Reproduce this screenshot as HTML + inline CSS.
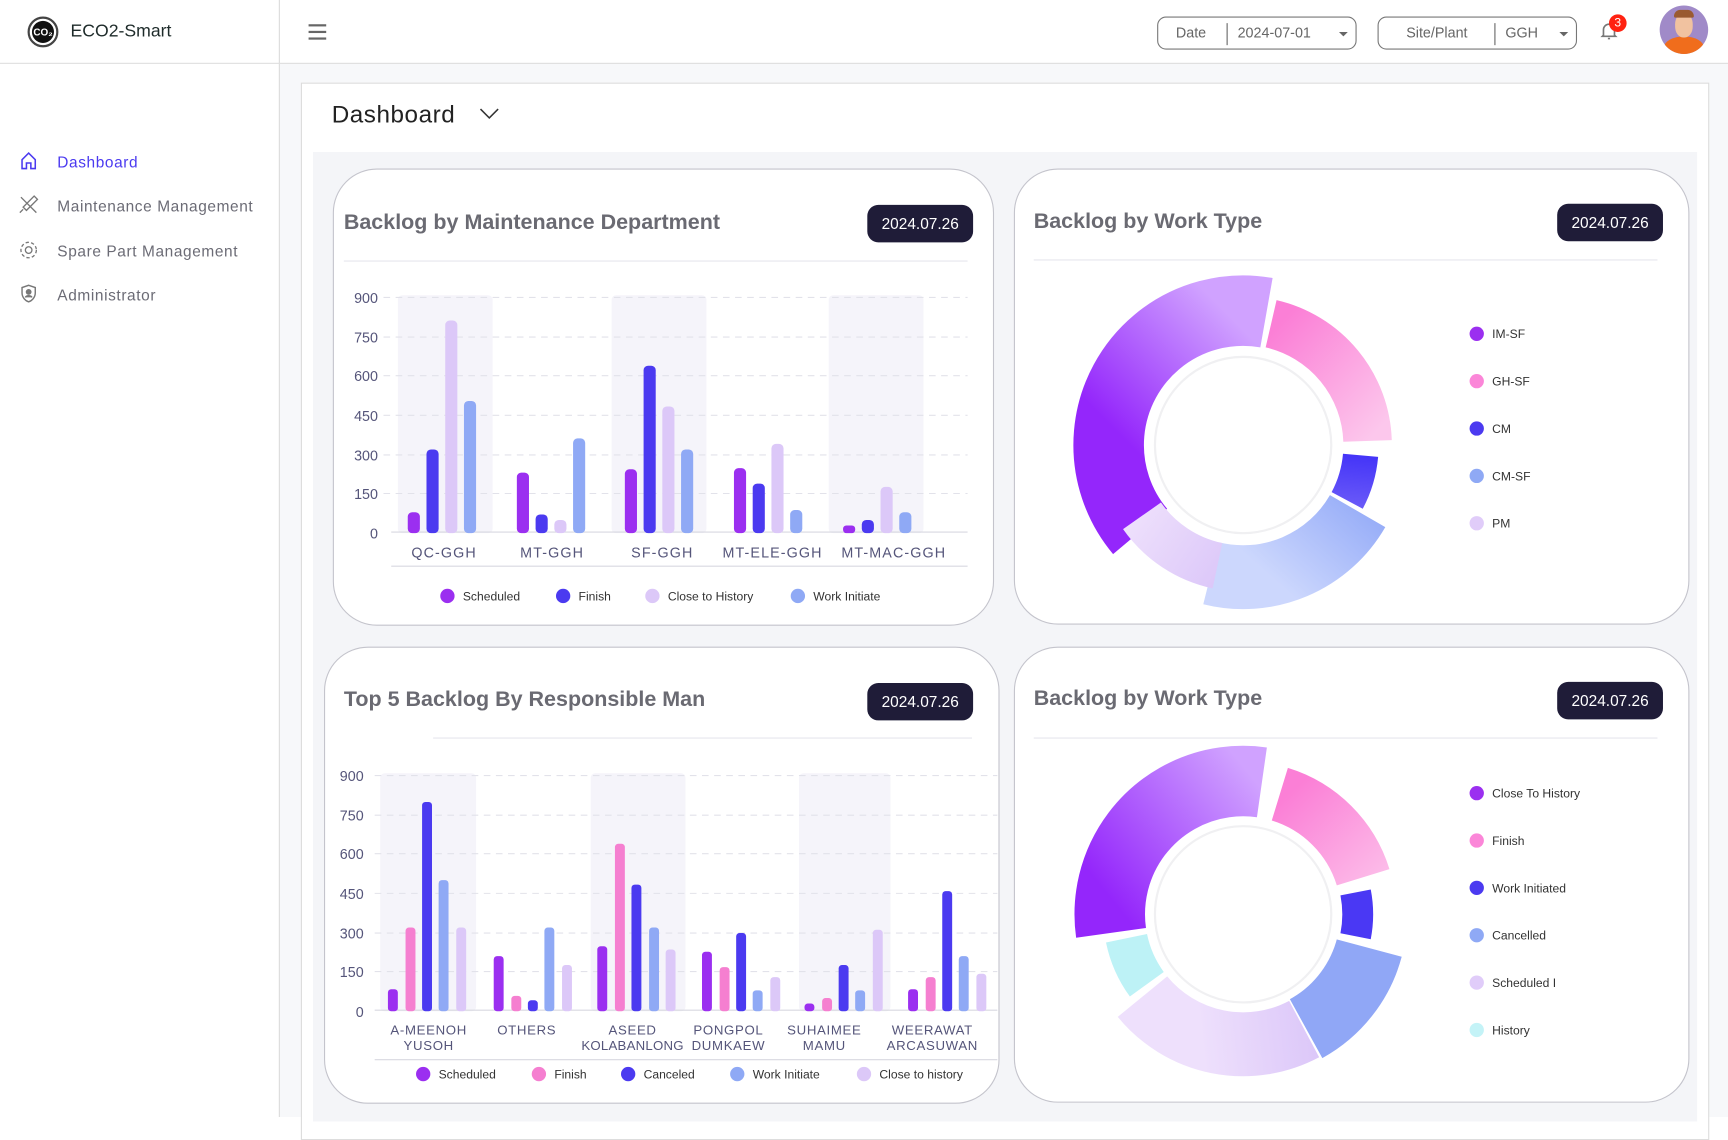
<!DOCTYPE html>
<html><head><meta charset="utf-8"><style>
*{margin:0;padding:0;box-sizing:border-box}
html,body{width:1728px;height:1117px;overflow:hidden;background:#fff;font-family:"Liberation Sans",sans-serif}
#s{position:absolute;left:0;top:0;width:1568px;height:1014px;transform:scale(1.10204,1.10158);transform-origin:0 0;background:#f7f8fa}
.a{position:absolute}
.nav{position:absolute;left:52px;font-size:14px;color:#6b6b75;letter-spacing:.55px}
.card{position:absolute;background:#fff;border:1px solid #c4c4cc;border-radius:40px}
.t{position:absolute;font-size:19.5px;font-weight:bold;color:#6a6a72}
.pill{position:absolute;background:#1f1c38;color:#fff;font-size:14px;border-radius:10px;width:96px;height:34px;line-height:34px;text-align:center}
.sel{position:absolute;top:15px;height:30px;border:1px solid #777;border-radius:8px;font-size:13px;color:#666}
</style></head><body><div id="s">
<div class="a" style="left:0;top:0;width:1568px;height:58px;background:#fff;border-bottom:1px solid #dcdcdc"></div>
<div class="a" style="left:0;top:58px;width:254px;height:956px;background:#fff;border-right:1px solid #dcdcdc"></div>
<div class="a" style="left:253px;top:0;width:1px;height:58px;background:#dcdcdc"></div>
<div class="a" style="left:25px;top:15px;width:28px;height:28px;border-radius:50%;border:2px solid #444;background:#fff"></div>
<div class="a" style="left:29px;top:19px;width:20px;height:20px;border-radius:50%;background:#111;color:#fff;font-size:9px;font-weight:bold;text-align:center;line-height:20px">CO₂</div>
<div class="a" style="left:64px;top:20px;font-size:16px;color:#1e2b2a">ECO2-Smart</div>
<div class="a" style="left:280px;top:22px;width:16px;height:2px;background:#666;box-shadow:0 6px 0 #666,0 12px 0 #666"></div>
<div class="sel" style="left:1050px;width:181px"><span class="a" style="left:16px;top:6px">Date</span><span class="a" style="left:62px;top:5px;width:1px;height:20px;background:#666"></span><span class="a" style="left:72px;top:6px">2024-07-01</span><span class="a" style="left:164px;top:13px;border:4px solid transparent;border-top:4px solid #666"></span></div>
<div class="sel" style="left:1250px;width:181px"><span class="a" style="left:25px;top:6px">Site/Plant</span><span class="a" style="left:105px;top:5px;width:1px;height:20px;background:#666"></span><span class="a" style="left:115px;top:6px">GGH</span><span class="a" style="left:164px;top:13px;border:4px solid transparent;border-top:4px solid #666"></span></div>
<svg class="a" style="left:1450px;top:18px" width="20" height="20" viewBox="0 0 20 20"><path d="M5 14V9a5 5 0 0110 0v5l1 1H4z" fill="none" stroke="#777" stroke-width="1.5"/><path d="M9 17h2" stroke="#777" stroke-width="1.5"/></svg>
<div class="a" style="left:1460px;top:13px;width:16px;height:16px;border-radius:50%;background:#f21;color:#fff;font-size:11px;text-align:center;line-height:16px">3</div>
<div class="a" style="left:1506px;top:5px;width:44px;height:44px;border-radius:50%;background:#a08ac8;overflow:hidden"><div class="a" style="left:4px;top:28px;width:36px;height:20px;border-radius:50%;background:#f06d1c"></div><div class="a" style="left:14px;top:7px;width:16px;height:22px;border-radius:45%;background:#f1c2a0"></div><div class="a" style="left:13px;top:4px;width:18px;height:7px;border-radius:8px 8px 2px 2px;background:#9a5a30"></div></div>
<svg class="a" style="left:17px;top:137px" width="18" height="18" viewBox="0 0 18 18"><path d="M3 16V8l6-6 6 6v8h-4v-5H7v5z" fill="none" stroke="#4b3af0" stroke-width="1.4"/></svg>
<div class="nav" style="top:139px;color:#4b3af0">Dashboard</div>
<svg class="a" style="left:16px;top:176px" width="20" height="20" viewBox="0 0 20 20" fill="none" stroke="#777" stroke-width="1.2"><path d="M3 3l14 14M15 2l3 3-10 10-3-3zM2 17l3-3"/></svg>
<div class="nav" style="top:179px">Maintenance Management</div>
<svg class="a" style="left:16px;top:217px" width="20" height="20" viewBox="0 0 20 20" fill="none" stroke="#777" stroke-width="1.2"><circle cx="10" cy="10" r="7" stroke-dasharray="3 2"/><circle cx="10" cy="10" r="3"/></svg>
<div class="nav" style="top:220px">Spare Part Management</div>
<svg class="a" style="left:16px;top:257px" width="20" height="20" viewBox="0 0 20 20" fill="none" stroke="#777" stroke-width="1.3"><path d="M10 2l6 2v5c0 4-3 7-6 8-3-1-6-4-6-8V4z"/><circle cx="10" cy="8" r="2" fill="#777"/><path d="M7 13c1-2 5-2 6 0" fill="#777"/></svg>
<div class="nav" style="top:260px">Administrator</div>
<div class="a" style="left:273px;top:75px;width:1278px;height:960px;background:#fff;border:1px solid #dcdcdc"></div>
<div class="a" style="left:301px;top:91px;font-size:22px;color:#222;letter-spacing:.5px">Dashboard</div>
<svg class="a" style="left:435px;top:97px" width="18" height="12"><path d="M1 2l8 8 8-8" fill="none" stroke="#333" stroke-width="1.4"/></svg>
<div class="a" style="left:284px;top:138px;width:1256px;height:880px;background:#f4f5f8"></div>
<div class="card" style="left:302px;top:153px;width:600px;height:415px"></div>
<div class="card" style="left:920px;top:153px;width:613px;height:414px"></div>
<div class="card" style="left:294px;top:587px;width:613px;height:415px"></div>
<div class="card" style="left:920px;top:587px;width:613px;height:414px"></div>
<div class="t" style="left:312px;top:191px">Backlog by Maintenance Department</div>
<div class="t" style="left:938px;top:190px">Backlog by Work Type</div>
<div class="t" style="left:312px;top:624px">Top 5 Backlog By Responsible Man</div>
<div class="t" style="left:938px;top:623px">Backlog by Work Type</div>
<div class="pill" style="left:787px;top:186px">2024.07.26</div>
<div class="pill" style="left:1413px;top:185px">2024.07.26</div>
<div class="pill" style="left:787px;top:620px">2024.07.26</div>
<div class="pill" style="left:1413px;top:619px">2024.07.26</div>
<svg class="a" style="left:0;top:0" width="1568" height="1014" viewBox="0 0 1568 1014" font-family="Liberation Sans, sans-serif">
<defs>
<linearGradient id="gp" x1="1" y1="0.46" x2="0" y2="0.54"><stop offset="0.2" stop-color="#9426fb"/><stop offset="0.8" stop-color="#d0a2ff"/></linearGradient>
<linearGradient id="gp2" x1="1" y1="0.2" x2="0" y2="0.8"><stop offset="0.2" stop-color="#9426fb"/><stop offset="0.8" stop-color="#d0a2ff"/></linearGradient>
<linearGradient id="gk" x1="0.8" y1="0" x2="0.2" y2="1"><stop offset="0.3" stop-color="#fb7fd6"/><stop offset="0.8" stop-color="#fcc7ec"/></linearGradient>
<linearGradient id="gb" x1="0" y1="0" x2="0" y2="1"><stop offset="0.5" stop-color="#4434f8"/><stop offset="1" stop-color="#9a8af8"/></linearGradient>
<linearGradient id="gl" x1="0.6" y1="0" x2="0.4" y2="1"><stop offset="0.3" stop-color="#8ea6f7"/><stop offset="0.8" stop-color="#ccd7fd"/></linearGradient>
<linearGradient id="gv" x1="0.3" y1="1" x2="0.7" y2="0"><stop offset="0.3" stop-color="#eee0fc"/><stop offset="0.8" stop-color="#d8c2f8"/></linearGradient>
</defs>
<g stroke="#e6e6ee"><line x1="312" y1="237" x2="878" y2="237"/><line x1="938" y1="236" x2="1504" y2="236"/><line x1="393" y1="670" x2="882" y2="670"/><line x1="938" y1="670" x2="1504" y2="670"/></g>
<g fill="#f5f4fa"><rect x="361" y="268" width="86" height="216" rx="4"/><rect x="555" y="268" width="86" height="216" rx="4"/><rect x="752" y="268" width="86" height="216" rx="4"/></g>
<g stroke="#e2e2ea" stroke-dasharray="6 5"><line x1="348" y1="270" x2="878" y2="270"/><line x1="348" y1="306" x2="878" y2="306"/><line x1="348" y1="341" x2="878" y2="341"/><line x1="348" y1="377" x2="878" y2="377"/><line x1="348" y1="413" x2="878" y2="413"/><line x1="348" y1="448" x2="878" y2="448"/></g>
<line x1="355" y1="483" x2="878" y2="483" stroke="#d8d8e0"/><line x1="355" y1="514" x2="878" y2="514" stroke="#d8d8e0"/>
<g font-size="13" fill="#55557a" text-anchor="end"><text x="343" y="275">900</text><text x="343" y="311">750</text><text x="343" y="346">600</text><text x="343" y="382">450</text><text x="343" y="418">300</text><text x="343" y="453">150</text><text x="343" y="489">0</text></g>
<g font-size="13" fill="#55557a" text-anchor="middle" letter-spacing="1"><text x="403" y="506">QC-GGH</text><text x="501" y="506">MT-GGH</text><text x="601" y="506">SF-GGH</text><text x="701" y="506">MT-ELE-GGH</text><text x="811" y="506">MT-MAC-GGH</text></g>
<g fill="#9b2ff0"><rect x="370" y="465" width="11" height="19" rx="4"/><rect x="469" y="429" width="11" height="55" rx="4"/><rect x="567" y="426" width="11" height="58" rx="4"/><rect x="666" y="425" width="11" height="59" rx="4"/><rect x="765" y="477" width="11" height="7" rx="3"/></g>
<g fill="#4b3af0"><rect x="387" y="408" width="11" height="76" rx="4"/><rect x="486" y="467" width="11" height="17" rx="4"/><rect x="584" y="332" width="11" height="152" rx="4"/><rect x="683" y="439" width="11" height="45" rx="4"/><rect x="782" y="472" width="11" height="12" rx="4"/></g>
<g fill="#dcc8f8"><rect x="404" y="291" width="11" height="193" rx="4"/><rect x="503" y="472" width="11" height="12" rx="4"/><rect x="601" y="369" width="11" height="115" rx="4"/><rect x="700" y="403" width="11" height="81" rx="4"/><rect x="799" y="442" width="11" height="42" rx="4"/></g>
<g fill="#8fa9f5"><rect x="421" y="364" width="11" height="120" rx="4"/><rect x="520" y="398" width="11" height="86" rx="4"/><rect x="618" y="408" width="11" height="76" rx="4"/><rect x="717" y="463" width="11" height="21" rx="4"/><rect x="816" y="465" width="11" height="19" rx="4"/></g>
<g font-size="11" fill="#333"><circle cx="406" cy="541" r="6.5" fill="#9b2ff0"/><text x="420" y="545">Scheduled</text><circle cx="511" cy="541" r="6.5" fill="#4b3af0"/><text x="525" y="545">Finish</text><circle cx="592" cy="541" r="6.5" fill="#dcc8f8"/><text x="606" y="545">Close to History</text><circle cx="724" cy="541" r="6.5" fill="#8fa9f5"/><text x="738" y="545">Work Initiate</text></g>
<g fill="#f5f4fa"><rect x="345" y="702" width="87" height="216" rx="4"/><rect x="536" y="702" width="86" height="216" rx="4"/><rect x="725" y="702" width="83" height="216" rx="4"/></g>
<g stroke="#e2e2ea" stroke-dasharray="6 5"><line x1="340" y1="704" x2="905" y2="704"/><line x1="340" y1="740" x2="905" y2="740"/><line x1="340" y1="775" x2="905" y2="775"/><line x1="340" y1="811" x2="905" y2="811"/><line x1="340" y1="847" x2="905" y2="847"/><line x1="340" y1="882" x2="905" y2="882"/></g>
<line x1="340" y1="917" x2="905" y2="917" stroke="#d8d8e0"/><line x1="340" y1="962" x2="905" y2="962" stroke="#d8d8e0"/>
<g font-size="13" fill="#55557a" text-anchor="end"><text x="330" y="709">900</text><text x="330" y="745">750</text><text x="330" y="780">600</text><text x="330" y="816">450</text><text x="330" y="852">300</text><text x="330" y="887">150</text><text x="330" y="923">0</text></g>
<g font-size="12" fill="#55557a" text-anchor="middle" letter-spacing=".6"><text x="389" y="939">A-MEENOH</text><text x="389" y="953">YUSOH</text><text x="478" y="939">OTHERS</text><text x="574" y="939">ASEED</text><text x="574" y="953" letter-spacing=".2">KOLABANLONG</text><text x="661" y="939">PONGPOL</text><text x="661" y="953">DUMKAEW</text><text x="748" y="939">SUHAIMEE</text><text x="748" y="953">MAMU</text><text x="846" y="939">WEERAWAT</text><text x="846" y="953">ARCASUWAN</text></g>
<g fill="#9b2ff0"><rect x="352" y="898" width="9" height="20" rx="3"/><rect x="448" y="868" width="9" height="50" rx="3"/><rect x="542" y="859" width="9" height="59" rx="3"/><rect x="637" y="864" width="9" height="54" rx="3"/><rect x="730" y="911" width="9" height="7" rx="3"/><rect x="824" y="898" width="9" height="20" rx="3"/></g>
<g fill="#f57fd0"><rect x="368" y="842" width="9" height="76" rx="3"/><rect x="464" y="904" width="9" height="14" rx="3"/><rect x="558" y="766" width="9" height="152" rx="3"/><rect x="653" y="878" width="9" height="40" rx="3"/><rect x="746" y="906" width="9" height="12" rx="3"/><rect x="840" y="887" width="9" height="31" rx="3"/></g>
<g fill="#4b3af0"><rect x="383" y="728" width="9" height="190" rx="3"/><rect x="479" y="908" width="9" height="10" rx="3"/><rect x="573" y="803" width="9" height="115" rx="3"/><rect x="668" y="847" width="9" height="71" rx="3"/><rect x="761" y="876" width="9" height="42" rx="3"/><rect x="855" y="809" width="9" height="109" rx="3"/></g>
<g fill="#8fa9f5"><rect x="398" y="799" width="9" height="119" rx="3"/><rect x="494" y="842" width="9" height="76" rx="3"/><rect x="589" y="842" width="9" height="76" rx="3"/><rect x="683" y="899" width="9" height="19" rx="3"/><rect x="776" y="899" width="9" height="19" rx="3"/><rect x="870" y="868" width="9" height="50" rx="3"/></g>
<g fill="#dcc8f8"><rect x="414" y="842" width="9" height="76" rx="3"/><rect x="510" y="876" width="9" height="42" rx="3"/><rect x="604" y="862" width="9" height="56" rx="3"/><rect x="699" y="887" width="9" height="31" rx="3"/><rect x="792" y="844" width="9" height="74" rx="3"/><rect x="886" y="884" width="9" height="34" rx="3"/></g>
<g font-size="11" fill="#333"><circle cx="384" cy="975" r="6.5" fill="#9b2ff0"/><text x="398" y="979">Scheduled</text><circle cx="489" cy="975" r="6.5" fill="#f57fd0"/><text x="503" y="979">Finish</text><circle cx="570" cy="975" r="6.5" fill="#4b3af0"/><text x="584" y="979">Canceled</text><circle cx="669" cy="975" r="6.5" fill="#8fa9f5"/><text x="683" y="979">Work Initiate</text><circle cx="784" cy="975" r="6.5" fill="#dcc8f8"/><text x="798" y="979">Close to history</text></g>
<g fill="none">
<circle cx="1128" cy="404" r="122" stroke="url(#gp)" stroke-width="64" stroke-dasharray="298 1000" transform="rotate(140 1128 404)"/>
<circle cx="1128" cy="404" r="113" stroke="url(#gk)" stroke-width="44" stroke-dasharray="148 1000" transform="rotate(-77 1128 404)"/>
<circle cx="1128" cy="404" r="107" stroke="url(#gb)" stroke-width="32" stroke-dasharray="43 1000" transform="rotate(5 1128 404)"/>
<circle cx="1128" cy="404" r="120" stroke="url(#gl)" stroke-width="58" stroke-dasharray="155 1000" transform="rotate(30 1128 404)"/>
<circle cx="1128" cy="404" r="112" stroke="url(#gv)" stroke-width="42" stroke-dasharray="84 1000" transform="rotate(102 1128 404)"/>
</g>
<circle cx="1128" cy="404" r="88" fill="#fff"/><circle cx="1128" cy="404" r="80" fill="#fff" stroke="#f0f0f2" stroke-width="2"/>
<g font-size="11" fill="#333"><circle cx="1340" cy="303" r="6.5" fill="#9b2ff0"/><text x="1354" y="307">IM-SF</text><circle cx="1340" cy="346" r="6.5" fill="#fb86d8"/><text x="1354" y="350">GH-SF</text><circle cx="1340" cy="389" r="6.5" fill="#4b3af0"/><text x="1354" y="393">CM</text><circle cx="1340" cy="432" r="6.5" fill="#8fa9f5"/><text x="1354" y="436">CM-SF</text><circle cx="1340" cy="475" r="6.5" fill="#e0ccf9"/><text x="1354" y="479">PM</text></g>
<g fill="none">
<circle cx="1128" cy="830" r="121" stroke="url(#gp2)" stroke-width="64" stroke-dasharray="224 1000" transform="rotate(172 1128 830)"/>
<circle cx="1128" cy="830" r="114" stroke="url(#gk)" stroke-width="50" stroke-dasharray="111 1000" transform="rotate(-73 1128 830)"/>
<circle cx="1128" cy="830" r="104" stroke="#4a38f4" stroke-width="28" stroke-dasharray="40 1000" transform="rotate(-11 1128 830)"/>
<circle cx="1128" cy="830" r="118" stroke="#90a7f6" stroke-width="62" stroke-dasharray="95 1000" transform="rotate(15 1128 830)"/>
<circle cx="1128" cy="830" r="118" stroke="url(#gv)" stroke-width="58" stroke-dasharray="162 1000" transform="rotate(62 1128 830)"/>
<circle cx="1128" cy="830" r="108" stroke="#bdf2f6" stroke-width="38" stroke-dasharray="46 1000" transform="rotate(144 1128 830)"/>
</g>
<circle cx="1128" cy="830" r="88" fill="#fff"/><circle cx="1128" cy="830" r="80" fill="#fff" stroke="#f0f0f2" stroke-width="2"/>
<g font-size="11" fill="#333"><circle cx="1340" cy="720" r="6.5" fill="#9b2ff0"/><text x="1354" y="724">Close To History</text><circle cx="1340" cy="763" r="6.5" fill="#fb86d8"/><text x="1354" y="767">Finish</text><circle cx="1340" cy="806" r="6.5" fill="#4b3af0"/><text x="1354" y="810">Work Initiated</text><circle cx="1340" cy="849" r="6.5" fill="#8fa9f5"/><text x="1354" y="853">Cancelled</text><circle cx="1340" cy="892" r="6.5" fill="#e0ccf9"/><text x="1354" y="896">Scheduled I</text><circle cx="1340" cy="935" r="6.5" fill="#c4f3f7"/><text x="1354" y="939">History</text></g>
</svg>
</div></body></html>
